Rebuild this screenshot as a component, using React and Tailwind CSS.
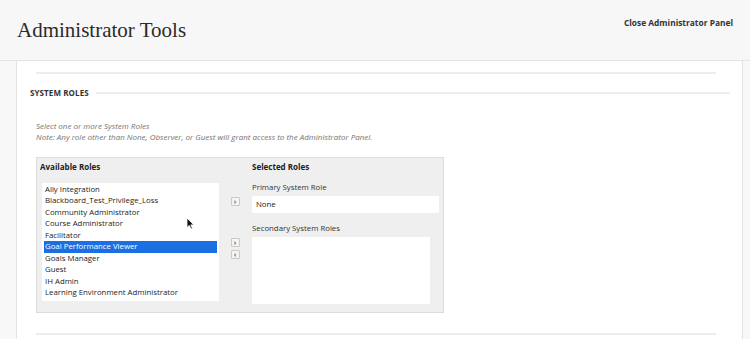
import React from "react"

const roles = [
    "Ally Integration",
    "Blackboard_Test_Privilege_Loss",
    "Community Administrator",
    "Course Administrator",
    "Facilitator",
    "Goal Performance Viewer",
    "Goals Manager",
    "Guest",
    "IH Admin",
    "Learning Environment Administrator",
]

const ArrowButton = ({ dir }) => (
    <div className="w-[9px] h-[9px] border border-[#c9c9c9] bg-[#f4f4f4] rounded-[1px] flex items-center justify-center text-[7px] font-bold leading-none text-[#666]">
        {dir === "right" ? "›" : "‹"}
    </div>
)

const App = () => {
    return (
        <div
            className="relative w-[750px] h-[339px] overflow-hidden bg-white text-[#222]"
            style={{ fontFamily: '"Open Sans", "Liberation Sans", sans-serif' }}
        >
            {/* header */}
            <div className="h-[61px] bg-[#f7f7f7] border-b border-[#e4e4e4] flex justify-between">
                <div
                    className="pl-[17px] pt-[16px] text-[21px] leading-[28px] text-[#2b2b2b]"
                    style={{ fontFamily: '"Liberation Serif", "DejaVu Serif", serif' }}
                >
                    Administrator Tools
                </div>
                <div className="pr-[17px] pt-[17px] text-[8.4px] leading-[12px] font-bold text-[#333]">
                    Close Administrator Panel
                </div>
            </div>

            {/* body */}
            <div className="flex h-[278px]">
                <div className="w-[17px] bg-[#f8f8f8] border-r border-[#e3e3e3]" />
                <div className="flex-1 flex flex-col">
                    <div className="mt-[11px] ml-[19px] mr-[26px] h-[2px] bg-[#ececec]" />

                    <div className="mt-[14px] ml-[13px] mr-[12px] h-[10px] flex items-center gap-[7px]">
                        <span className="text-[8px] font-bold tracking-[0.1px] text-[#333] leading-none">
                            SYSTEM ROLES
                        </span>
                        <div className="flex-1 h-[2px] bg-[#ececec]" />
                    </div>

                    <div className="mt-[22px] ml-[19px] text-[8px] leading-[11px] italic text-[#747474]">
                        <div>Select one or more System Roles</div>
                        <div>
                            Note: Any role other than None, Observer, or Guest will grant access to the
                            Administrator Panel.
                        </div>
                    </div>

                    {/* roles box */}
                    <div className="mt-[15px] ml-[19px] w-[408px] h-[156px] bg-[#efefef] border border-[#dddddd] flex">
                        <div className="w-[183px] pl-[3px] pt-[4px] flex flex-col">
                            <div className="text-[8px] font-bold leading-[10px] text-[#222]">
                                Available Roles
                            </div>
                            <div className="mt-[11px] ml-[2px] w-[177px] h-[118px] bg-white rounded-[1px] pt-[1px] px-[2px]">
                                {roles.map((role, index) => (
                                    <div
                                        key={index}
                                        className={`h-[11.45px] px-[1px] text-[7.8px] leading-[11.45px] whitespace-nowrap ${
                                            role === "Goal Performance Viewer"
                                                ? "bg-[#1c6fe3] text-white"
                                                : "text-[#222]"
                                        }`}
                                    >
                                        {role}
                                    </div>
                                ))}
                            </div>
                        </div>

                        <div className="w-[32px] flex flex-col items-center pr-[2px]">
                            <div className="mt-[39px]">
                                <ArrowButton dir="right" />
                            </div>
                            <div className="mt-[32px]">
                                <ArrowButton dir="right" />
                            </div>
                            <div className="mt-[3px]">
                                <ArrowButton dir="left" />
                            </div>
                        </div>

                        <div className="flex-1 pt-[4px] pr-[4px] flex flex-col">
                            <div className="text-[8px] font-bold leading-[10px] text-[#222]">
                                Selected Roles
                            </div>
                            <div className="mt-[10px] text-[7.8px] leading-[10px] text-[#333]">
                                Primary System Role
                            </div>
                            <div className="mt-[4px] h-[17px] bg-white rounded-[1px] pl-[4px] flex items-center text-[7.8px] text-[#222]">
                                None
                            </div>
                            <div className="mt-[10px] text-[7.8px] leading-[10px] text-[#333]">
                                Secondary System Roles
                            </div>
                            <div className="mt-[4px] w-[178px] h-[67px] bg-white rounded-[1px]" />
                        </div>
                    </div>

                    <div className="mt-[20px] ml-[19px] mr-[26px] h-[2px] bg-[#ececec]" />
                </div>
                <div className="w-[8px] bg-[#f8f8f8] border-l border-[#e3e3e3]" />
            </div>

            {/* mouse cursor */}
            <svg
                className="absolute left-[186px] top-[217px]"
                width="9"
                height="13"
                viewBox="0 0 9 13"
            >
                <path
                    d="M1 1 L1 10.5 L3.3 8.4 L5 12 L6.4 11.3 L4.8 7.9 L7.8 7.9 Z"
                    fill="#111"
                    stroke="#fff"
                    strokeWidth="0.8"
                />
            </svg>
        </div>
    )
}

export default App
